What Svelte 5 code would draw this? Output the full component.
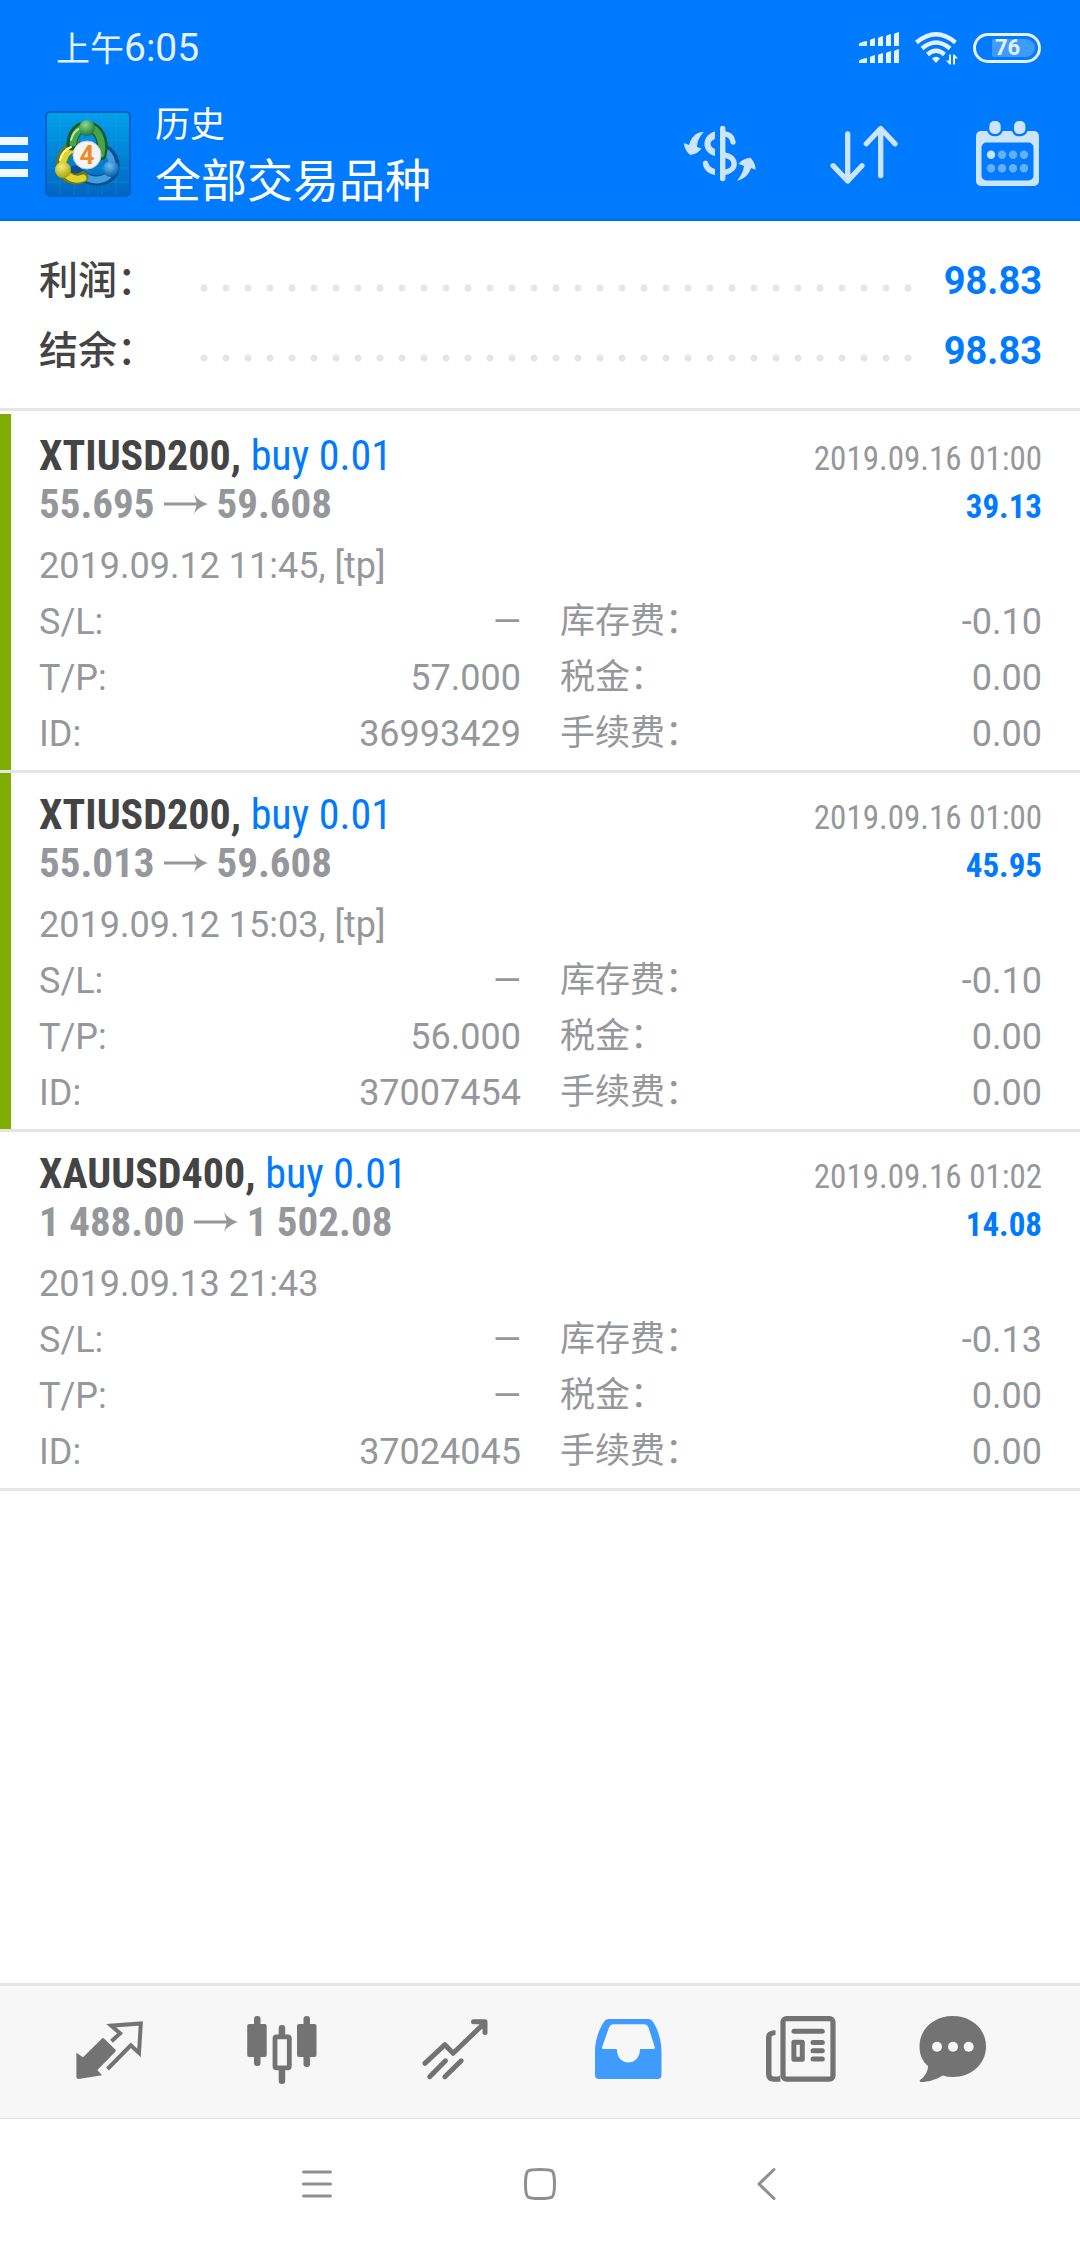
<script>
	const summary = [
		{ label: '利润：', value: '98.83' },
		{ label: '结余：', value: '98.83' }
	];

	const deals = [
		{
			symbol: 'XTIUSD200',
			action: 'buy 0.01',
			open: '55.695',
			close: '59.608',
			closeTime: '2019.09.16 01:00',
			profit: '39.13',
			comment: '2019.09.12 11:45, [tp]',
			sl: '—',
			tp: '57.000',
			id: '36993429',
			swap: '-0.10',
			taxes: '0.00',
			charges: '0.00',
			hitTp: true
		},
		{
			symbol: 'XTIUSD200',
			action: 'buy 0.01',
			open: '55.013',
			close: '59.608',
			closeTime: '2019.09.16 01:00',
			profit: '45.95',
			comment: '2019.09.12 15:03, [tp]',
			sl: '—',
			tp: '56.000',
			id: '37007454',
			swap: '-0.10',
			taxes: '0.00',
			charges: '0.00',
			hitTp: true
		},
		{
			symbol: 'XAUUSD400',
			action: 'buy 0.01',
			open: '1 488.00',
			close: '1 502.08',
			closeTime: '2019.09.16 01:02',
			profit: '14.08',
			comment: '2019.09.13 21:43',
			sl: '—',
			tp: '—',
			id: '37024045',
			swap: '-0.13',
			taxes: '0.00',
			charges: '0.00',
			hitTp: false
		}
	];

	// label + value pairs, left column then right column on each line
	function details(deal) {
		return [
			['S/L:', deal.sl],
			['库存费：', deal.swap],
			['T/P:', deal.tp],
			['税金：', deal.taxes],
			['ID:', deal.id],
			['手续费：', deal.charges]
		];
	}

	const signalBars = [
		{ x: 0, w: 8, left: 12, right: 9 },
		{ x: 11, w: 5, left: 8, right: 6 },
		{ x: 19, w: 5, left: 6, right: 4 },
		{ x: 27, w: 5, left: 4, right: 2 },
		{ x: 35, w: 5, left: 2, right: 0 }
	];

	let tab = $state('history');
</script>

<div class="screen">
	<header>
		<!-- Status bar -->
		<div class="status">
			<div class="time">上午<span>6:05</span></div>
			<div class="indicators">
				<svg width="40" height="32" viewBox="0 0 40 32" fill="currentColor">
					{#each [0, 17] as row}
						{#each signalBars as bar}
							<path
								d="M{bar.x} {row + bar.left}Q{bar.x + 1} {row + bar.right + 1} {bar.x + bar.w} {row + bar.right}V{row + 14}H{bar.x}z"
							/>
						{/each}
					{/each}
				</svg>
				<svg class="wifi" width="42" height="33" viewBox="0 0 42 33">
					<g fill="none" stroke="currentColor" stroke-width="4.4">
						<path d="M1.5 10.5Q21 -6 40.5 10.5" />
						<path d="M7 16.5Q21 4.5 35 16.5" />
						<path d="M12.5 22.5Q21 15 29.5 22.5" />
					</g>
					<path fill="currentColor" d="M17 26.5Q21 23 25 26.5L21 31z" />
					<path fill="currentColor" d="M34 22.5h2v10h-1.5l-3.5-4h3zM38 32.5v-10h1.5l3.5 4h-3v6z" />
				</svg>
				<div class="battery"><span>76</span></div>
			</div>
		</div>

		<!-- Action bar -->
		<div class="bar">
			<button class="menu" aria-label="菜单">
				<i></i><i></i><i></i>
			</button>
			<svg class="logo" width="86" height="86" viewBox="0 0 86 86">
				<defs>
					<linearGradient id="tile" x1="0" y1="0" x2="0" y2="1">
						<stop offset="0" stop-color="#02a0ec" />
						<stop offset="1" stop-color="#0066c0" />
					</linearGradient>
					<radialGradient id="green" cx="0.4" cy="0.3" r="0.7">
						<stop offset="0" stop-color="#8fd68f" />
						<stop offset="1" stop-color="#1c7a34" />
					</radialGradient>
					<radialGradient id="yellow" cx="0.4" cy="0.3" r="0.7">
						<stop offset="0" stop-color="#f4ee7c" />
						<stop offset="1" stop-color="#a9a40c" />
					</radialGradient>
					<radialGradient id="blue" cx="0.4" cy="0.3" r="0.7">
						<stop offset="0" stop-color="#6cc0f2" />
						<stop offset="1" stop-color="#0a5fae" />
					</radialGradient>
				</defs>
				<rect x="1" y="1" width="84" height="84" rx="4" fill="url(#tile)" stroke="#0660c4" stroke-width="2" />
				<path d="M15 2v82M29 2v82M43 2v82M57 2v82M71 2v82M2 15h82M2 29h82M2 43h82M2 57h82M2 71h82" stroke="#2bb0f2" stroke-opacity="0.25" />
				<g fill="none" stroke-linecap="round">
					<path d="M30 60C48 76 72 70 69 52C67 44 64 41 58 38" stroke="#0a4f90" stroke-width="11" />
					<path d="M38 64C50 74 70 68 67 52C66 45 62 41 58 40" stroke="#3f9fe0" stroke-width="7" />
					<path d="M38 66C28 72 14 64 17 50C19 40 26 36 34 36" stroke="#77760f" stroke-width="11" />
					<path d="M38 67C28 71 15 63 18 50C20 41 26 37 34 37" stroke="#dcd62e" stroke-width="7" />
					<path d="M27 34C27 20 36 15 43 16C53 17 60 28 56 44" stroke="#145c24" stroke-width="11" />
					<path d="M28 32C29 21 36 16 43 16C52 17 59 28 56 43" stroke="#46a24c" stroke-width="7" />
					<path d="M26 29C28 21 33 18 36 17" stroke="#b7e6b2" stroke-width="2" />
					<path d="M15 49C17 41 21 38 26 36" stroke="#fffbb0" stroke-width="2" />
				</g>
				<circle cx="42" cy="17" r="8" fill="url(#green)" />
				<circle cx="18" cy="59" r="8" fill="url(#yellow)" />
				<circle cx="66" cy="58" r="8" fill="url(#blue)" />
				<circle cx="42" cy="44" r="14" fill="#f4f4f6" stroke="#c4c9cf" />
				<text x="42" y="53" text-anchor="middle" class="logo-number">4</text>
			</svg>
			<div class="titles">
				<p>历史</p>
				<h1>全部交易品种</h1>
			</div>
			<div class="actions">
				<button aria-label="交易品种">
					<svg width="72" height="72" viewBox="0 0 72 72" fill="currentColor">
						<path d="M19.7 14C11 14 7 20 5 27L0 25C0 30 3 34 6 37C11 36.5 15 34 17.5 30.5L13 29C13 24 15 19 19.7 14z" />
						<path d="M53 62.7C61 61 65 56 67 50L71.7 51.7C71.5 47 69.5 42.5 66.5 39.7C62 40 57.5 42 54.5 45.7L60 48C59.5 53 57 58 53 62.7z" />
						<path d="M31 13.5C17 17 17 34.5 31 38V31C25 28.5 25 23 31 21z" />
						<path d="M31 51V57C25 56 19.5 52 19 46A2.5 2.5 0 0 1 24 44.5C25 48 27.5 50 31 51z" />
						<g fill="none" stroke="currentColor" stroke-width="5.4" stroke-linecap="round">
							<path d="M38.7 10.5V60.5" />
							<path d="M40 16C45 16 48.5 19 49 24" />
							<path d="M40 37C53 38.5 54 52.5 40 54.5" />
						</g>
					</svg>
				</button>
				<button aria-label="排序">
					<svg class="line" width="72" height="72" viewBox="0 0 72 72" stroke-width="5.3">
						<path d="M19.7 16V62M5 47.7L19.7 63L34 47.7" />
						<path d="M52.7 57.5V11M38.3 25.7L52.7 10.5L67 25.7" />
					</svg>
				</button>
				<button aria-label="日期">
					<svg width="72" height="72" viewBox="0 0 72 72">
						<rect x="4" y="13" width="63" height="55" rx="5" fill="currentColor" />
						<rect x="9.5" y="24.5" width="52" height="38" rx="5" fill="#007aff" />
						<g fill="currentColor" stroke="#007aff" stroke-width="4.6" paint-order="stroke">
							<rect x="17.3" y="3" width="11.4" height="13" rx="5" />
							<rect x="42" y="3" width="11.4" height="13" rx="5" />
						</g>
						{#each [36.7, 50.3] as cy}
							{#each [19, 30, 41, 52] as cx}
								<circle {cx} {cy} r="4.2" fill={cx + cy < 56 ? '#cce4ff' : '#66afff'} />
							{/each}
						{/each}
					</svg>
				</button>
			</div>
		</div>
	</header>

	<main>
		<dl class="summary">
			{#each summary as item}
				<div>
					<dt>{item.label}</dt>
					<dd><i class="dots"></i>{item.value}</dd>
				</div>
			{/each}
		</dl>

		{#each deals as deal}
			<article class:hit={deal.hitTp}>
				<div class="head">
					<h2>{deal.symbol}, <span>{deal.action}</span></h2>
					<time>{deal.closeTime}</time>
				</div>
				<div class="head">
					<p class="prices">
						{deal.open}
						<svg width="44" height="20" viewBox="0 0 44 20">
							<path d="M0 10H33" stroke="currentColor" stroke-width="3" />
							<path d="M30 0C33 5 38 8 44 10C38 12 33 15 30 20L33 10z" fill="currentColor" />
						</svg>
						{deal.close}
					</p>
					<strong>{deal.profit}</strong>
				</div>
				<p class="comment">{deal.comment}</p>
				<dl class="details">
					{#each details(deal) as [label, value]}
						<div>
							<dt>{label}</dt>
							<dd>{value}</dd>
						</div>
					{/each}
				</dl>
			</article>
		{/each}
	</main>

	<!-- Tabs -->
	<nav class="tabs">
		<button aria-label="行情" class:active={tab === 'quotes'} onclick={() => (tab = 'quotes')}>
			<svg width="72" height="72" viewBox="0 0 72 72">
				<path fill="currentColor" d="M3.4 36.7L10 41.3L29 22.5Q30 21.5 31 22.5L42.5 33.7Q43.3 34.7 42.5 35.5L24.4 54L29 59.3L5.5 63Q3.4 63 3.4 61z" />
				<path fill="none" stroke="currentColor" stroke-width="4" d="M38.5 25.3L47.1 17.3L38.2 9.7L67.8 7.5L66 37L57.8 29.3L34.5 53" />
			</svg>
		</button>
		<button aria-label="图表" class:active={tab === 'charts'} onclick={() => (tab = 'charts')}>
			<svg width="72" height="72" viewBox="0 0 72 72">
				<g fill="currentColor">
					<rect x="8" y="0" width="6.5" height="50" rx="3" />
					<rect x="1.2" y="8" width="19.5" height="33" rx="2" />
					<rect x="57.5" y="0" width="6.5" height="51" rx="3" />
					<rect x="51" y="8" width="19.5" height="33" rx="2" />
					<rect x="32.7" y="9" width="6.5" height="12" rx="3" />
					<rect x="32.7" y="51" width="6.5" height="17" rx="3" />
				</g>
				<rect x="29" y="20.8" width="14.3" height="31" rx="1.5" fill="none" stroke="currentColor" stroke-width="4.8" />
			</svg>
		</button>
		<button aria-label="交易" class:active={tab === 'trade'} onclick={() => (tab = 'trade')}>
			<svg class="line" width="72" height="72" viewBox="0 0 72 72" stroke-width="5">
				<path d="M5.9 47.3L25.9 28.7L34.1 37.3L65 7.5M54.5 5.7H66V16.5" />
				<path d="M10.7 60.7L26.5 44.8M25.9 60.7L42.2 44.8" />
			</svg>
		</button>
		<button aria-label="历史" class:active={tab === 'history'} onclick={() => (tab = 'history')}>
			<svg width="72" height="72" viewBox="0 0 72 72">
				<path
					fill="currentColor"
					fill-rule="evenodd"
					d="M3 34C3.5 22 8 11 13 4.5Q14.5 3 16.5 3H56.5Q58.5 3 60 4.5C65 11 69 22 69.5 34V59Q69.5 63 65.5 63H7Q3 63 3 59zM10.2 31Q9.5 33 11.5 33H24.8C25 51 47.8 51 48 33H61Q63.3 33 62.7 31L56.5 11.5Q55 8.3 52 8.3H21Q18.5 8.3 17 11.5z"
				/>
			</svg>
		</button>
		<button aria-label="新闻" class:active={tab === 'news'} onclick={() => (tab = 'news')}>
			<svg width="72" height="72" viewBox="0 0 72 72" fill="none" stroke="currentColor">
				<rect x="18" y="2.6" width="50" height="60.5" rx="3.5" stroke-width="5.2" />
				<path d="M10.5 14.3V19Q6.5 19 6.5 21.5V58Q6.5 60.5 9 60.5H13Q15.4 60.5 15.4 58V65.7H9Q1 65.7 1 58V22Q1 14.3 10.5 14.3z" fill="currentColor" stroke="none" />
				<path d="M29 15.3H57.3M48 26.5H57.3M48 34.7H57.3M48 43H57.3" stroke-width="5" stroke-linecap="round" />
				<rect x="28.9" y="26.2" width="8.4" height="17" stroke-width="5" stroke-linejoin="round" />
			</svg>
		</button>
		<button aria-label="消息" class:active={tab === 'messages'} onclick={() => (tab = 'messages')}>
			<svg width="72" height="72" viewBox="0 0 72 72">
				<path fill="currentColor" d="M35.8 0C54.5 0 69 13 69 30.5S54.5 61 35.8 61Q30.5 61 26 59.5C18 64 11 66 4 66Q2 65.5 3 64C8 61 11 55 11 50C5 45 2.5 38 2.5 30.5C2.5 13 17 0 35.8 0z" />
				{#each [20, 36, 51.7] as cx}
					<circle {cx} cy="30.7" r="5" fill="#f7f7f7" />
				{/each}
			</svg>
		</button>
	</nav>

	<!-- System navigation -->
	<nav class="system">
		<button aria-label="最近任务">
			<svg class="line" width="34" height="34" viewBox="0 0 34 34" stroke-width="3"><path d="M3.5 5H30.5M3.5 17H30.5M3.5 29H30.5" /></svg>
		</button>
		<button aria-label="主屏幕">
			<svg class="line" width="34" height="34" viewBox="0 0 34 34" stroke-width="3"><path d="M17 2.5Q27 2.5 29 4Q31.5 6 31.5 17T29 30Q27 31.5 17 31.5T5 30Q2.5 28 2.5 17T5 4Q7 2.5 17 2.5z" /></svg>
		</button>
		<button aria-label="返回">
			<svg class="line" width="34" height="34" viewBox="0 0 34 34" stroke-width="3"><path d="M28 2.5L13 17L28 31.5" /></svg>
		</button>
	</nav>
</div>

<style>
	:global(body) {
		margin: 0;
		background: #fff;
	}

	.screen {
		display: flex;
		flex-direction: column;
		min-height: 100vh;
		font-family: Roboto, 'Noto Sans CJK SC', sans-serif;
		font-size: 36px;
		color: #96979b;
	}

	p, h1, h2, dl, dd {
		margin: 0;
	}

	button {
		display: flex;
		align-items: center;
		justify-content: center;
		padding: 0;
		border: 0;
		background: none;
		color: inherit;
		cursor: pointer;
	}

	svg {
		display: block;
		flex: none;
	}

	.line {
		fill: none;
		stroke: currentColor;
		stroke-linecap: round;
		stroke-linejoin: round;
	}

	/* Header */
	header {
		background: #007aff;
		color: #fff;
	}

	.status {
		display: flex;
		align-items: center;
		justify-content: space-between;
		height: 44px;
		padding: 26px 39px 19px 56px;
		color: #e5f1ff;
	}

	.time {
		font-size: 34px;
		line-height: 44px;
	}
	.time span {
		font-size: 39px;
	}

	.indicators {
		display: flex;
		align-items: center;
		gap: 16px;
	}
	.wifi {
		overflow: visible;
	}

	.battery {
		box-sizing: border-box;
		width: 68px;
		height: 30px;
		padding: 3px 3px 3px 16px;
		border: 3px solid #e5f1ff;
		border-radius: 15px;
	}
	.battery span {
		display: block;
		padding-left: 3px;
		border-radius: 2px 9px 9px 2px;
		background: #409bff;
		font-size: 22px;
		font-weight: 700;
		line-height: 18px;
	}

	.bar {
		display: flex;
		align-items: center;
		box-sizing: border-box;
		height: 132px;
		border-bottom: 2px solid #006de4;
	}

	.menu {
		flex-direction: column;
		align-items: flex-start;
		gap: 8px;
		width: 45px;
		height: 100%;
		padding-top: 6px;
	}
	.menu i {
		width: 28px;
		height: 8px;
		background: #f0f7ff;
	}

	.logo-number {
		font-size: 26px;
		font-weight: 700;
		fill: #f08a24;
	}

	.titles {
		flex: 1;
		padding-top: 6px;
		padding-left: 24px;
	}
	.titles p {
		font-size: 35px;
		line-height: 48px;
	}
	.titles h1 {
		font-size: 46px;
		font-weight: 400;
		line-height: 62px;
	}

	.actions {
		display: flex;
		color: #cce4ff;
	}
	.actions button {
		width: 144px;
		height: 130px;
	}

	/* Totals */
	.summary {
		padding: 25px 38px 22px 39px;
		border-bottom: 3px solid #e5e5e5;
		margin-bottom: 3px;
		font-size: 38px;
		font-weight: 700;
	}
	.summary div {
		display: flex;
		line-height: 70px;
	}
	.summary dt {
		width: 154px;
		font-size: 39px;
		font-weight: 500;
		color: #444;
	}
	.summary dd {
		flex: 1;
		display: flex;
		align-items: center;
		color: #007aff;
	}
	.dots {
		flex: 1;
		height: 22px;
		margin-right: 25px;
		margin-top: 13px;
		background: radial-gradient(circle at center, #e5e5e5 3px, transparent 4px) 0 0 / 22px 22px round;
	}

	/* Deals */
	article {
		padding: 18px 38px 8px 39px;
		border-bottom: 3px solid #e5e5e5;
	}
	article.hit {
		box-shadow: inset 11px 0 #7fae00;
	}

	.head {
		display: flex;
		align-items: baseline;
		justify-content: space-between;
		height: 48px;
		font-family: 'Roboto Condensed', 'Liberation Sans Narrow', Roboto, sans-serif;
		font-size: 33px;
		line-height: 48px;
	}
	.head h2 {
		font-size: 42px;
		font-weight: 700;
		color: #444;
	}
	.head h2 span {
		font-weight: 400;
		color: #007aff;
	}
	.head strong {
		color: #007aff;
	}
	.prices {
		display: flex;
		align-items: center;
		gap: 9px;
		font-size: 41px;
		font-weight: 700;
	}

	.comment {
		margin-top: 10px;
		line-height: 56px;
	}

	.details {
		display: grid;
		grid-template-columns: 1fr 1fr;
		column-gap: 39px;
		line-height: 56px;
	}
	.details div {
		display: flex;
		justify-content: space-between;
	}
	.details div:nth-child(even) dt {
		font-size: 35px;
	}

	/* Tabs */
	.tabs {
		display: grid;
		grid-template-columns: repeat(5, 173fr) 132fr;
		height: 132px;
		margin-top: auto;
		padding: 0 61px 0 22px;
		border-top: 3px solid #e5e5e5;
		border-bottom: 1px solid #e0e0e0;
		background: #f7f7f7;
		color: #737373;
	}
	.tabs .active {
		color: #409bff;
	}

	.system {
		display: grid;
		grid-template-columns: repeat(3, 1fr);
		height: 129px;
		padding: 0 205px;
		color: #8f8f8f;
	}
</style>
